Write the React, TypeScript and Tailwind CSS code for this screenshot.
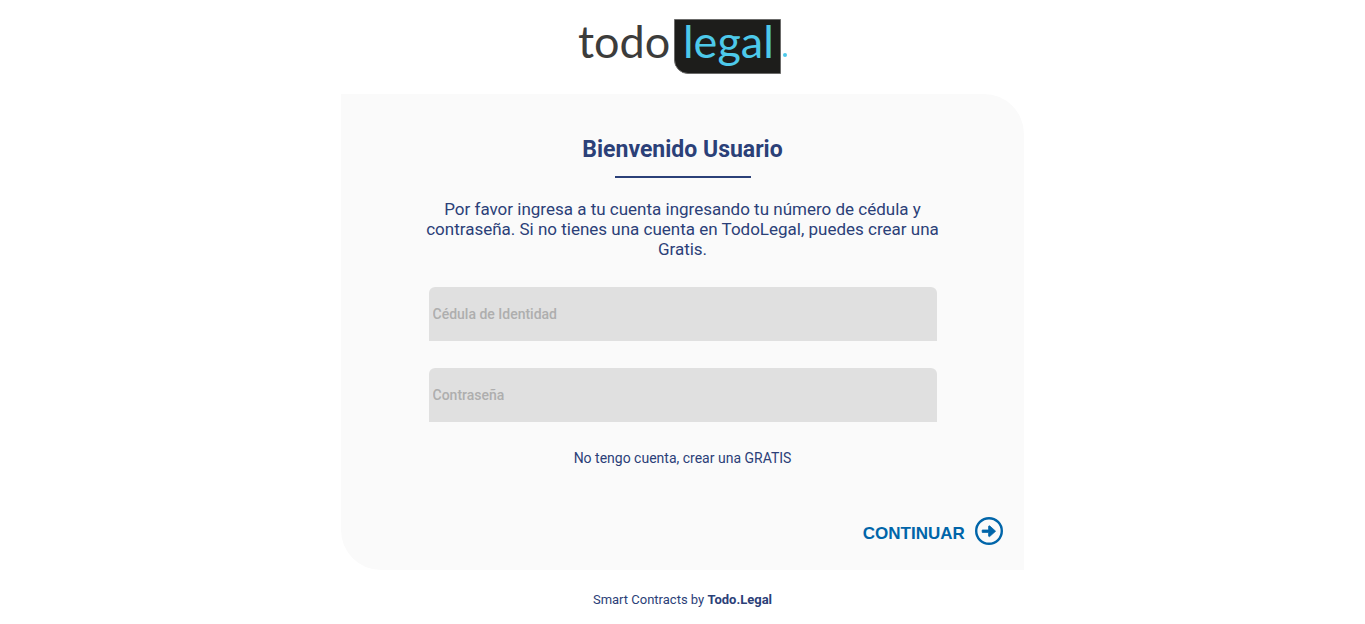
import type { InputHTMLAttributes } from "react";

function Logo() {
  return (
    <div
      aria-label="todolegal."
      className="flex h-[55px] items-start font-['Lato','Open_Sans',sans-serif] text-[45px] leading-[44px] text-[#3c3c3b]"
    >
      <span className="w-24">todo</span>
      <span className="h-full w-[107px] rounded-bl-[14px] border border-[#6b6b6a] bg-[#1d1d1b] pl-2 leading-[42px] text-[#4dc9ea]">
        legal
      </span>
      <span className="mt-[34px] ml-0.5 size-1 rounded-full bg-[#4dc9ea]" />
    </div>
  );
}

function ArrowCircle() {
  return (
    <svg className="size-7" viewBox="0 0 28 28" fill="none" aria-hidden="true">
      <circle cx="14" cy="14" r="12.8" stroke="#0065a9" strokeWidth="2.4" />
      <path
        d="M7.2 13H13.6V9.2L14.6 8.8L20.6 14.2L14.6 19.6L13.6 19.2V15.4H7.2Z"
        fill="#0065a9"
        stroke="#0065a9"
        strokeWidth="0.8"
        strokeLinejoin="round"
      />
    </svg>
  );
}

function Field({ label, ...rest }: { label: string } & InputHTMLAttributes<HTMLInputElement>) {
  return (
    <input
      aria-label={label}
      placeholder={label}
      className="h-[54px] w-full rounded-t-md bg-[#e0e0e0] px-1 text-sm font-medium text-[#2b4078] outline-none placeholder:text-[#aeaeae]"
      {...rest}
    />
  );
}

export default function App() {
  return (
    <div className="flex min-h-screen flex-col items-center bg-white font-['Roboto',sans-serif] text-[#2b4078]">
      <header className="pt-[19px] pb-5">
        <Logo />
      </header>
      <main className="w-1/2 rounded-tr-[40px] rounded-bl-[40px] bg-[#fafafa] px-[21px] pt-[42px] pb-5">
        <form className="flex flex-col items-center" onSubmit={(e) => e.preventDefault()}>
          <h1 className="text-[23px] leading-7 font-bold">Bienvenido Usuario</h1>
          <hr className="mt-3 w-[136px] border-t-2 border-[#2b4078]" />
          <p className="mt-[21px] w-full max-w-[528px] text-center text-[17px] leading-5">
            Por favor ingresa a tu cuenta ingresando tu número de cédula y contraseña. Si no tienes
            una cuenta en TodoLegal, puedes crear una Gratis.
          </p>
          <div className="mt-7 flex w-4/5 max-w-[508px] flex-col gap-[27px]">
            <Field label="Cédula de Identidad" type="text" name="cedula" />
            <Field label="Contraseña" type="password" name="password" />
          </div>
          <a href="#crear" className="mt-6 text-sm leading-6">
            No tengo cuenta, crear una GRATIS
          </a>
          <button
            type="submit"
            className="mt-[47px] flex cursor-pointer items-start gap-2.5 self-end font-['Liberation_Sans',sans-serif] text-[17px] leading-[33px] font-bold text-[#0065a9]"
          >
            <span>CONTINUAR</span>
            <ArrowCircle />
          </button>
        </form>
      </main>
      <footer className="pt-5 text-[13px] leading-5">
        Smart Contracts by <strong className="font-bold">Todo.Legal</strong>
      </footer>
    </div>
  );
}
